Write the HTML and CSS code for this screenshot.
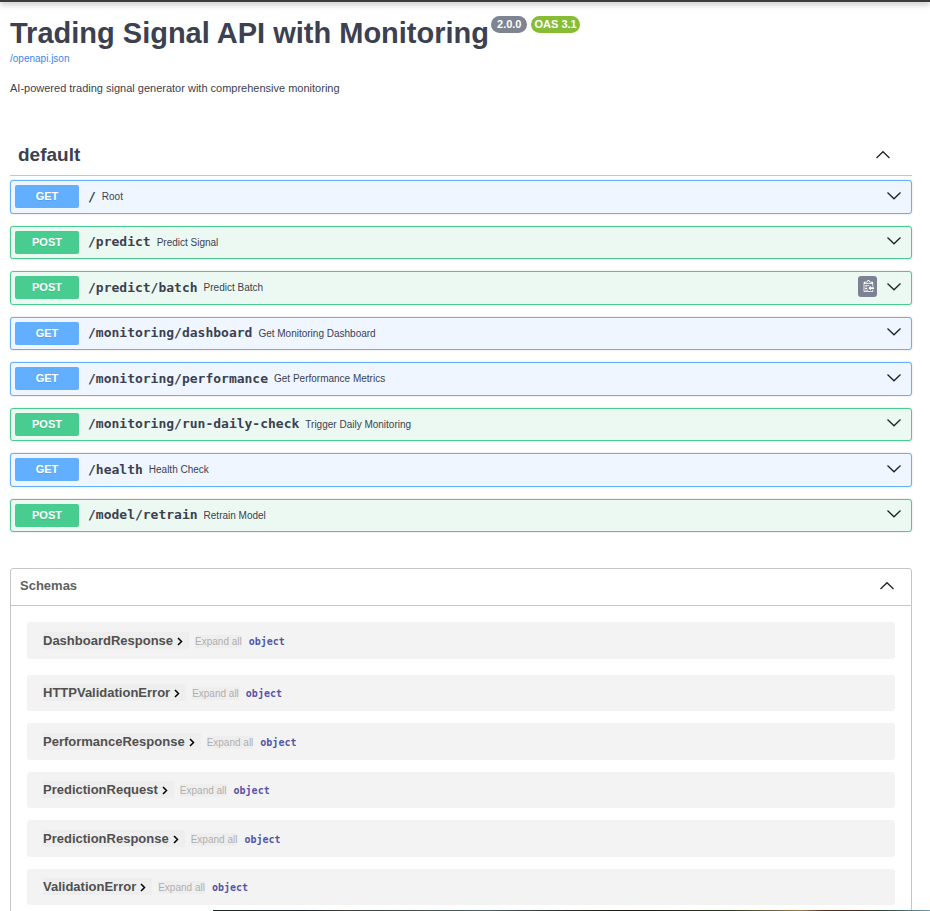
FILE: index.html
```html
<!DOCTYPE html>
<html lang="en">
<head>
<meta charset="utf-8">
<meta name="viewport" content="width=device-width, initial-scale=1">
<title>Trading Signal API with Monitoring</title>
<link rel="stylesheet" href="styles.css">
</head>
<body>
<svg class="sprite" aria-hidden="true">
  <symbol id="down" viewBox="0 0 16 10"><path d="M1.500 1.500 8 7.800l6.500-6.300"/></symbol>
  <symbol id="up" viewBox="0 0 16 10"><path d="M1.500 8 8 1.700l6.500 6.300"/></symbol>
  <symbol id="right" viewBox="0 0 6 9"><path d="M1 1l3.500 3.500L1 8"/></symbol>
</svg>
<div class="topbar"></div>
<main class="page">
  <header class="info">
    <h1 class="title">Trading Signal API with Monitoring <span class="badges"><span class="badge">2.0.0</span><span class="badge badge-oas">OAS 3.1</span></span></h1>
    <a class="spec-link" href="/openapi.json">/openapi.json</a>
    <p class="description">AI-powered trading signal generator with comprehensive monitoring</p>
  </header>

  <section>
    <div class="tag">
      <h2 class="tag-name">default</h2>
      <button class="icon-button" aria-label="Collapse default"><svg class="chevron"><use href="#up"/></svg></button>
    </div>
    <div class="operations">
      <div class="op get"><button class="op-main"><span class="method">GET</span><span class="path">/</span><span class="summary">Root</span></button><button class="icon-button" aria-label="Expand"><svg class="chevron"><use href="#down"/></svg></button></div>
      <div class="op post"><button class="op-main"><span class="method">POST</span><span class="path">/predict</span><span class="summary">Predict Signal</span></button><button class="icon-button" aria-label="Expand"><svg class="chevron"><use href="#down"/></svg></button></div>
      <div class="op post"><button class="op-main"><span class="method">POST</span><span class="path">/predict/batch</span><span class="summary">Predict Batch</span></button><button class="copy" aria-label="Copy path"><svg width="12" height="13" viewBox="0 0 15 16"><path fill="#fff" fill-rule="evenodd" d="M4 12h4v1H4v-1zm5-6H4v1h5V6zm2 3V7l-3 3 3 3v-2h5V9h-5zM6.500 8H4v1h2.500V8zM4 11h2.500v-1H4v1zm9 1h1v2c-.02.280-.110.520-.3.700-.190.180-.420.280-.7.300H3c-.550 0-1-.450-1-1V3c0-.550.450-1 1-1h3c0-1.110.890-2 2-2 1.110 0 2 .890 2 2h3c.550 0 1 .450 1 1v5h-1V5H3v9h10v-2zM4 4h8c0-.550-.450-1-1-1h-1c-.550 0-1-.450-1-1s-.450-1-1-1-1 .450-1 1-.450 1-1 1H5c-.550 0-1 .450-1 1z"/></svg></button><button class="icon-button" aria-label="Expand"><svg class="chevron"><use href="#down"/></svg></button></div>
      <div class="op get"><button class="op-main"><span class="method">GET</span><span class="path">/monitoring/dashboard</span><span class="summary">Get Monitoring Dashboard</span></button><button class="icon-button" aria-label="Expand"><svg class="chevron"><use href="#down"/></svg></button></div>
      <div class="op get"><button class="op-main"><span class="method">GET</span><span class="path">/monitoring/performance</span><span class="summary">Get Performance Metrics</span></button><button class="icon-button" aria-label="Expand"><svg class="chevron"><use href="#down"/></svg></button></div>
      <div class="op post"><button class="op-main"><span class="method">POST</span><span class="path">/monitoring/run-daily-check</span><span class="summary">Trigger Daily Monitoring</span></button><button class="icon-button" aria-label="Expand"><svg class="chevron"><use href="#down"/></svg></button></div>
      <div class="op get"><button class="op-main"><span class="method">GET</span><span class="path">/health</span><span class="summary">Health Check</span></button><button class="icon-button" aria-label="Expand"><svg class="chevron"><use href="#down"/></svg></button></div>
      <div class="op post"><button class="op-main"><span class="method">POST</span><span class="path">/model/retrain</span><span class="summary">Retrain Model</span></button><button class="icon-button" aria-label="Expand"><svg class="chevron"><use href="#down"/></svg></button></div>
    </div>
  </section>

  <section class="schemas">
    <div class="schemas-head">
      <h2 class="schemas-name">Schemas</h2>
      <button class="icon-button" aria-label="Collapse schemas"><svg class="chevron"><use href="#up"/></svg></button>
    </div>
    <div class="models">
      <article class="model"><button class="model-name">DashboardResponse<svg class="arrow"><use href="#right"/></svg></button><button class="expand">Expand all</button><strong class="type">object</strong></article>
      <article class="model"><button class="model-name">HTTPValidationError<svg class="arrow"><use href="#right"/></svg></button><button class="expand">Expand all</button><strong class="type">object</strong></article>
      <article class="model"><button class="model-name">PerformanceResponse<svg class="arrow"><use href="#right"/></svg></button><button class="expand">Expand all</button><strong class="type">object</strong></article>
      <article class="model"><button class="model-name">PredictionRequest<svg class="arrow"><use href="#right"/></svg></button><button class="expand">Expand all</button><strong class="type">object</strong></article>
      <article class="model"><button class="model-name">PredictionResponse<svg class="arrow"><use href="#right"/></svg></button><button class="expand">Expand all</button><strong class="type">object</strong></article>
      <article class="model"><button class="model-name">ValidationError<svg class="arrow"><use href="#right"/></svg></button><button class="expand">Expand all</button><strong class="type">object</strong></article>
    </div>
  </section>
</main>
<div class="backdrop"></div>
</body>
</html>
```
FILE: styles.css
```css
* { box-sizing: border-box; }
body { margin: 0; background: #fff; color: #3b4151; font-family: "Liberation Sans", Arial, sans-serif; }
html { scrollbar-width: none; }
h1, h2, p { margin: 0; }
button { margin: 0; padding: 0; border: 0; background: none; color: inherit; font: inherit; cursor: pointer; }
svg { display: block; fill: none; }
.sprite { position: absolute; width: 0; height: 0; }

.topbar { height: 2px; background: #3b3b3b; box-shadow: 0 1px 6px rgba(0, 0, 0, .6); }
.page { padding: 0 18px 0 10px; }

.info { padding-top: 14px; }
.title { display: flex; align-items: flex-start; gap: 2px; font-size: 29px; line-height: 34px; }
.badges { display: flex; gap: 4px; }
.badge { padding: 0 6px; border-radius: 9px; background: #7d8492; color: #fff; font-size: 11px; line-height: 17px; }
.badge-oas { padding: 0 3px; background: #86bd35; }
.spec-link { display: block; width: max-content; margin-top: 3px; color: #3b86e8; font-size: 10px; line-height: 12px; text-decoration: none; }
.description { margin-top: 16px; font-size: 11px; line-height: 14px; }

.tag { display: flex; align-items: center; justify-content: space-between; height: 41px; margin-top: 40px; padding: 0 21px 0 8px; border-bottom: 1px solid #c4c6ca; }
.tag-name { font-size: 19px; line-height: 24px; }
.icon-button { flex: none; }
.chevron { width: 16px; height: 10px; stroke: #222; stroke-width: 1.300; }

.operations { display: grid; grid-auto-rows: 1fr; gap: 12px; min-height: 352px; margin-top: 4px; }
.op { display: flex; align-items: center; padding: 0 9px 2px 4px; border: 1px solid; border-radius: 3px; box-shadow: 0 0 2px rgba(0, 0, 0, .19); }
.op-main { flex: 1; display: flex; align-items: center; padding-top: 2px; text-align: left; }
.get { border-color: #61affe; background: #eff6ff; }
.post { border-color: #49cc90; background: #ecf9f3; }
.method { width: 64px; border-radius: 2px; color: #fff; font-size: 11px; font-weight: 700; line-height: 23px; text-align: center; text-shadow: 0 1px 0 rgba(0, 0, 0, .1); }
.get .method { background: #61affe; }
.post .method { background: #49cc90; }
.path { margin-left: 9px; font: 700 13px/16px "DejaVu Sans Mono", monospace; }
.summary { margin-left: 6px; padding-top: 1px; font-size: 10px; line-height: 16px; }
.copy { display: grid; place-items: center; width: 19px; height: 21px; margin-right: 9px; border-radius: 3px; background: #7d8293; }

.schemas { margin-top: 36px; border: 1px solid #c4c6ca; border-radius: 3px; }
.schemas-head { display: flex; align-items: center; justify-content: space-between; height: 37px; padding: 0 16px 2px 9px; border-bottom: 1px solid #c4c6ca; }
.schemas-name { color: #606060; font-size: 13px; line-height: 18px; }
.models { display: flex; flex-direction: column; gap: 12px; min-height: 331px; padding: 16px 16px 32px; }
.model { flex: 1; display: flex; align-items: center; padding: 0 16px; border-radius: 3px; background: #f3f3f3; }
.model:first-child { margin-bottom: 4px; }
.model-name { display: flex; align-items: center; gap: 4px; padding-right: 6px; background: #eee; color: #505050; font-size: 13px; font-weight: 700; line-height: 17px; }
.arrow { width: 6px; height: 9px; margin-top: 2px; stroke: #000; stroke-width: 1.500; }
.expand { margin: 2px 7px 0 6px; background: #eee; color: #afaeae; font-size: 10px; line-height: 13px; }
.type { padding-top: 2px; color: #5555aa; font: 700 10px/13px "DejaVu Sans Mono", monospace; }

.backdrop { position: fixed; right: 0; bottom: 0; left: 213px; height: 1px; background: linear-gradient(90deg, #1d2a24, #1c2630 12%, #3c4038 18%, #4c6066 38%, #2a2c26 50%, #1c1612 58%, #2c3a20 72%, #a08040 82%, #6a2a14 85%, #4a2a1c 90%, #25402a 93%, #6f9fb8); }
```
